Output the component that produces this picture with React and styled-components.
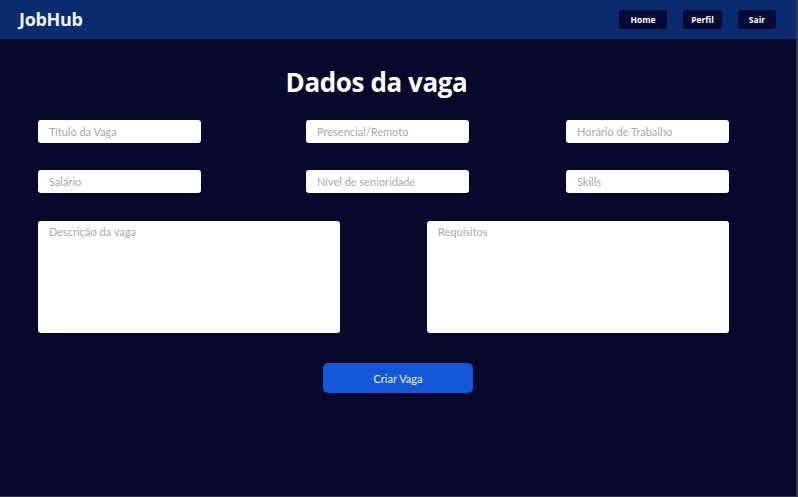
import React from "react";
import styled, { createGlobalStyle } from "styled-components";

const GlobalStyle = createGlobalStyle`
    * {
        box-sizing: border-box;
    }

    body {
        margin: 0;
        background-color: #07082b;
        font-family: "Lato", "Open Sans", sans-serif;
    }
`;

export default function App() {
    return (
        <StyledPage>
            <GlobalStyle />
            <StyledHeader>
                <StyledLogo>JobHub</StyledLogo>
                <StyledNav>
                    <StyledNavButton $width={48}>Home</StyledNavButton>
                    <StyledNavButton $width={39}>Perfil</StyledNavButton>
                    <StyledNavButton $width={38}>Sair</StyledNavButton>
                </StyledNav>
            </StyledHeader>
            <StyledMain>
                <StyledTitle>Dados da vaga</StyledTitle>
                <StyledInputGrid>
                    <StyledInput placeholder="Título da Vaga" />
                    <StyledInput placeholder="Presencial/Remoto" />
                    <StyledInput placeholder="Horário de Trabalho" />
                    <StyledInput placeholder="Salário" />
                    <StyledInput placeholder="Nível de senioridade" />
                    <StyledInput placeholder="Skills" />
                </StyledInputGrid>
                <StyledTextAreaRow>
                    <StyledTextArea placeholder="Descrição da vaga" />
                    <StyledTextArea placeholder="Requisitos" />
                </StyledTextAreaRow>
                <StyledSubmitButton>Criar Vaga</StyledSubmitButton>
            </StyledMain>
        </StyledPage>
    );
}

const StyledPage = styled.div`
    height: 497px;
    display: flex;
    flex-direction: column;
    border-right: 2px solid #2f3949;
    border-bottom: 1px solid #2f3949;
    background-color: #07082b;
`;

const StyledHeader = styled.header`
    height: 39px;
    flex-shrink: 0;
    display: flex;
    align-items: center;
    justify-content: space-between;
    padding: 0 20px 1px 18px;
    background-color: #0b2b70;
    border-bottom: 1px solid #0e2f78;
`;

const StyledLogo = styled.h1`
    margin: 0 0 0 1px;
    font-family: "Open Sans", sans-serif;
    font-size: 18px;
    font-weight: 700;
    letter-spacing: -0.3px;
    color: #f2f4fa;
`;

const StyledNav = styled.nav`
    display: flex;
    align-items: center;
    gap: 16px;
    margin-top: 1px;
`;

const StyledNavButton = styled.button`
    width: ${(props) => props.$width}px;
    height: 19px;
    padding: 0;
    border: none;
    border-radius: 3px;
    background-color: #080a36;
    color: #ffffff;
    font-family: "Open Sans", sans-serif;
    font-size: 8.5px;
    font-weight: 700;
`;

const StyledMain = styled.main`
    flex: 1;
    display: flex;
    flex-direction: column;
    align-items: center;
    padding: 0 67px 0 38px;
`;

const StyledTitle = styled.h2`
    margin: 27px 14px 21px 0;
    font-family: "Open Sans", sans-serif;
    font-size: 26px;
    font-weight: 700;
    letter-spacing: -0.4px;
    line-height: 33px;
    color: #ffffff;
`;

const StyledInputGrid = styled.div`
    align-self: stretch;
    display: grid;
    grid-template-columns: 268px 260px 163px;
    row-gap: 27px;
`;

const StyledInput = styled.input`
    width: 163px;
    height: 23px;
    padding: 0 11px;
    border: none;
    border-radius: 3px;
    background-color: #ffffff;
    font-family: "Lato", sans-serif;
    font-size: 11px;
    outline: none;

    &::placeholder {
        color: #a9a9a9;
    }
`;

const StyledTextAreaRow = styled.div`
    align-self: stretch;
    display: flex;
    justify-content: space-between;
    margin-top: 28px;
`;

const StyledTextArea = styled.textarea`
    width: 302px;
    height: 112px;
    padding: 4px 11px;
    border: none;
    border-radius: 3px;
    background-color: #ffffff;
    font-family: "Lato", sans-serif;
    font-size: 11px;
    resize: none;
    outline: none;

    &::placeholder {
        color: #a9a9a9;
    }
`;

const StyledSubmitButton = styled.button`
    width: 150px;
    height: 30px;
    margin-top: 30px;
    margin-left: 29px;
    border: none;
    border-radius: 5px;
    background-color: #1557d9;
    color: #eef2fc;
    font-family: "Lato", sans-serif;
    font-size: 11px;
`;
